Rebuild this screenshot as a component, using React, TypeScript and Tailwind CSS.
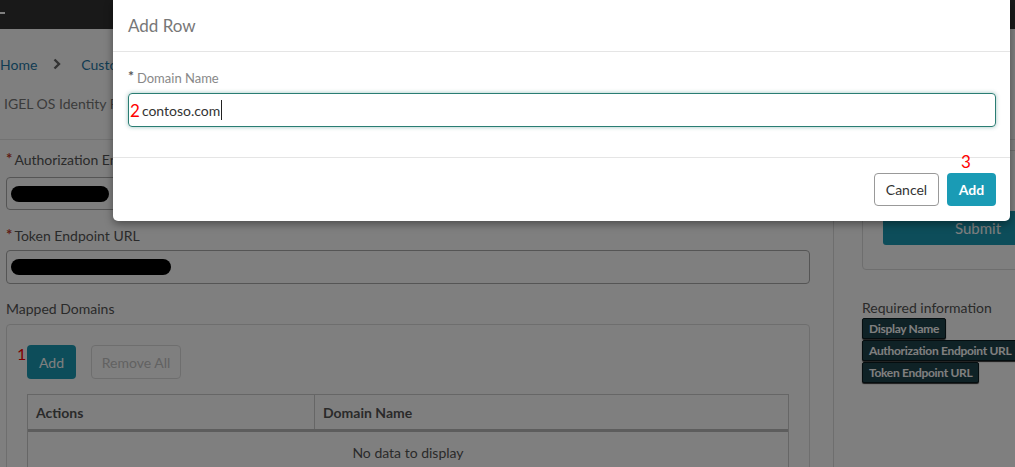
import React from "react";

function Label({ text }: { text: string }) {
  return (
    <div className="flex items-start text-[14px] leading-[20px] text-[#555]">
      <span className="text-[#c0392b] text-[15px] font-bold leading-[14px] mr-[2px] mt-[1px]">*</span>
      <span>{text}</span>
    </div>
  );
}

export default function App() {
  return (
    <div
      className="relative w-[1015px] h-[467px] overflow-hidden bg-white"
      style={{ fontFamily: "Lato, 'Liberation Sans', sans-serif" }}
    >
      {/* Page underneath */}
      <div className="flex flex-col">
        <div className="h-[29px] bg-[#333] pt-[12px]">
          <div className="w-[5px] h-[2px] bg-white" />
        </div>
        <div className="flex items-center h-[20px] mt-[25px] text-[14px] text-[#1f78a6]">
          <span>Home</span>
          <svg className="ml-[16px] mr-[20px]" width="8" height="12" viewBox="0 0 8 12">
            <path d="M1.5 1.5 L6 6 L1.5 10.5" fill="none" stroke="#666" strokeWidth="2.4" />
          </svg>
          <span>Customization</span>
        </div>
        <div className="h-[20px] mt-[20px] pl-[4px] text-[14px] leading-[20px] text-[#777]">
          IGEL OS Identity Provider
        </div>
        <div className="mt-[25px] border-t border-[#e4e4e4] flex">
          <div className="w-[833px] shrink-0 pl-[6px] pr-[23px] pt-[10px] flex flex-col">
            <Label text="Authorization Endpoint URL" />
            <div className="mt-[7px] h-[33px] border border-[#aaa] rounded-[4px] flex items-center pl-[4px]">
              <div className="w-[98px] h-[16px] rounded-full bg-black" />
            </div>
            <div className="mt-[16px]">
              <Label text="Token Endpoint URL" />
            </div>
            <div className="mt-[4px] h-[34px] border border-[#aaa] rounded-[4px] flex items-center pl-[4px]">
              <div className="w-[160px] h-[16px] rounded-full bg-black" />
            </div>
            <div className="mt-[15px] text-[14px] leading-[20px] text-[#555]">Mapped Domains</div>
            <div className="mt-[5px] border border-[#ddd] rounded-[4px] px-[20px] pt-[20px] h-[200px]">
              <div className="flex items-center gap-[15px]">
                <div className="relative">
                  <span className="absolute left-[-10px] top-[-3px] text-[16px] text-[#ff0000]">1</span>
                  <button className="h-[34px] w-[49px] rounded-[4px] bg-[#1a9bb5] text-white text-[14px]">Add</button>
                </div>
                <button className="h-[34px] w-[90px] rounded-[4px] border border-[#ddd] text-[#c4c4c4] text-[14px]">
                  Remove All
                </button>
              </div>
              <div className="mt-[15px] border border-[#ccc]">
                <div className="flex h-[37px] border-b-[3px] border-[#bbb] text-[14px] font-bold text-[#555]">
                  <div className="w-[287px] border-r border-[#ccc] flex items-center pl-[8px]">Actions</div>
                  <div className="flex-1 flex items-center pl-[8px]">Domain Name</div>
                </div>
                <div className="h-[40px] flex items-center justify-center text-[14px] text-[#555]">
                  No data to display
                </div>
              </div>
            </div>
          </div>
          <div className="shrink-0 border-l border-[#ddd] pl-[28px] pt-[10px] h-[400px]">
            <div className="w-[232px] border border-[#ddd] rounded-[4px] px-[20px] pt-[60px] pb-[24px]">
              <button className="w-[190px] h-[34px] bg-[#1a9bb5] text-white text-[15px] rounded-[3px]">Submit</button>
            </div>
            <div className="mt-[28px] text-[14px] leading-[20px] text-[#555]">Required information</div>
            <div className="flex flex-col items-start gap-[1px]">
              {["Display Name", "Authorization Endpoint URL", "Token Endpoint URL"].map((t) => (
                <span
                  key={t}
                  className="h-[21px] px-[6px] flex items-center bg-[#1f444c] border border-[#0a1a1e] rounded-[2px] text-[12px] tracking-[-0.3px] font-bold text-white whitespace-nowrap shadow-[0_1px_1px_rgba(0,0,0,0.8)]"
                >
                  {t}
                </span>
              ))}
            </div>
          </div>
        </div>
      </div>

      {/* Dimming overlay */}
      <div className="absolute inset-0 bg-black/50" />

      {/* Modal */}
      <div className="absolute left-[113px] top-0 w-[897px] h-[221px] bg-white rounded-b-[5px] shadow-[0_3px_8px_rgba(0,0,0,0.4)] flex flex-col">
        <div className="h-[52px] border-b border-[#e5e5e5] flex items-center pl-[15px] text-[17px] text-[#777]">
          Add Row
        </div>
        <div className="pl-[15px] pr-[14px] pt-[18px] pb-[30px] border-b border-[#e5e5e5]">
          <div className="flex items-start h-[16px] text-[13px] leading-[16px] text-[#888]">
            <span className="text-[#555] text-[14px] font-bold leading-[12px] mr-[3px]">*</span>
            <span>Domain Name</span>
          </div>
          <div className="mt-[7px] h-[34px] border border-[#2a7d73] rounded-[4px] shadow-[0_0_4px_rgba(42,125,115,0.45)] flex items-center pl-[1px]">
            <span className="text-[17px] text-[#ff0000] leading-none">2</span>
            <span className="ml-[2px] text-[14px] text-[#333]">contoso.com</span>
            <span className="w-px h-[20px] bg-[#222] ml-[1px]" />
          </div>
        </div>
        <div className="flex-1 flex items-start justify-end gap-[8px] pt-[15px] pr-[14px]">
          <button className="h-[33px] w-[65px] rounded-[4px] border border-[#999] bg-white text-[14px] text-[#333]">
            Cancel
          </button>
          <div className="relative">
            <span className="absolute left-[14px] top-[-20px] text-[17px] text-[#ff0000] leading-none">3</span>
            <button className="h-[33px] w-[49px] rounded-[4px] bg-[#1a9bb5] text-[14px] font-bold text-white">
              Add
            </button>
          </div>
        </div>
      </div>
    </div>
  );
}
